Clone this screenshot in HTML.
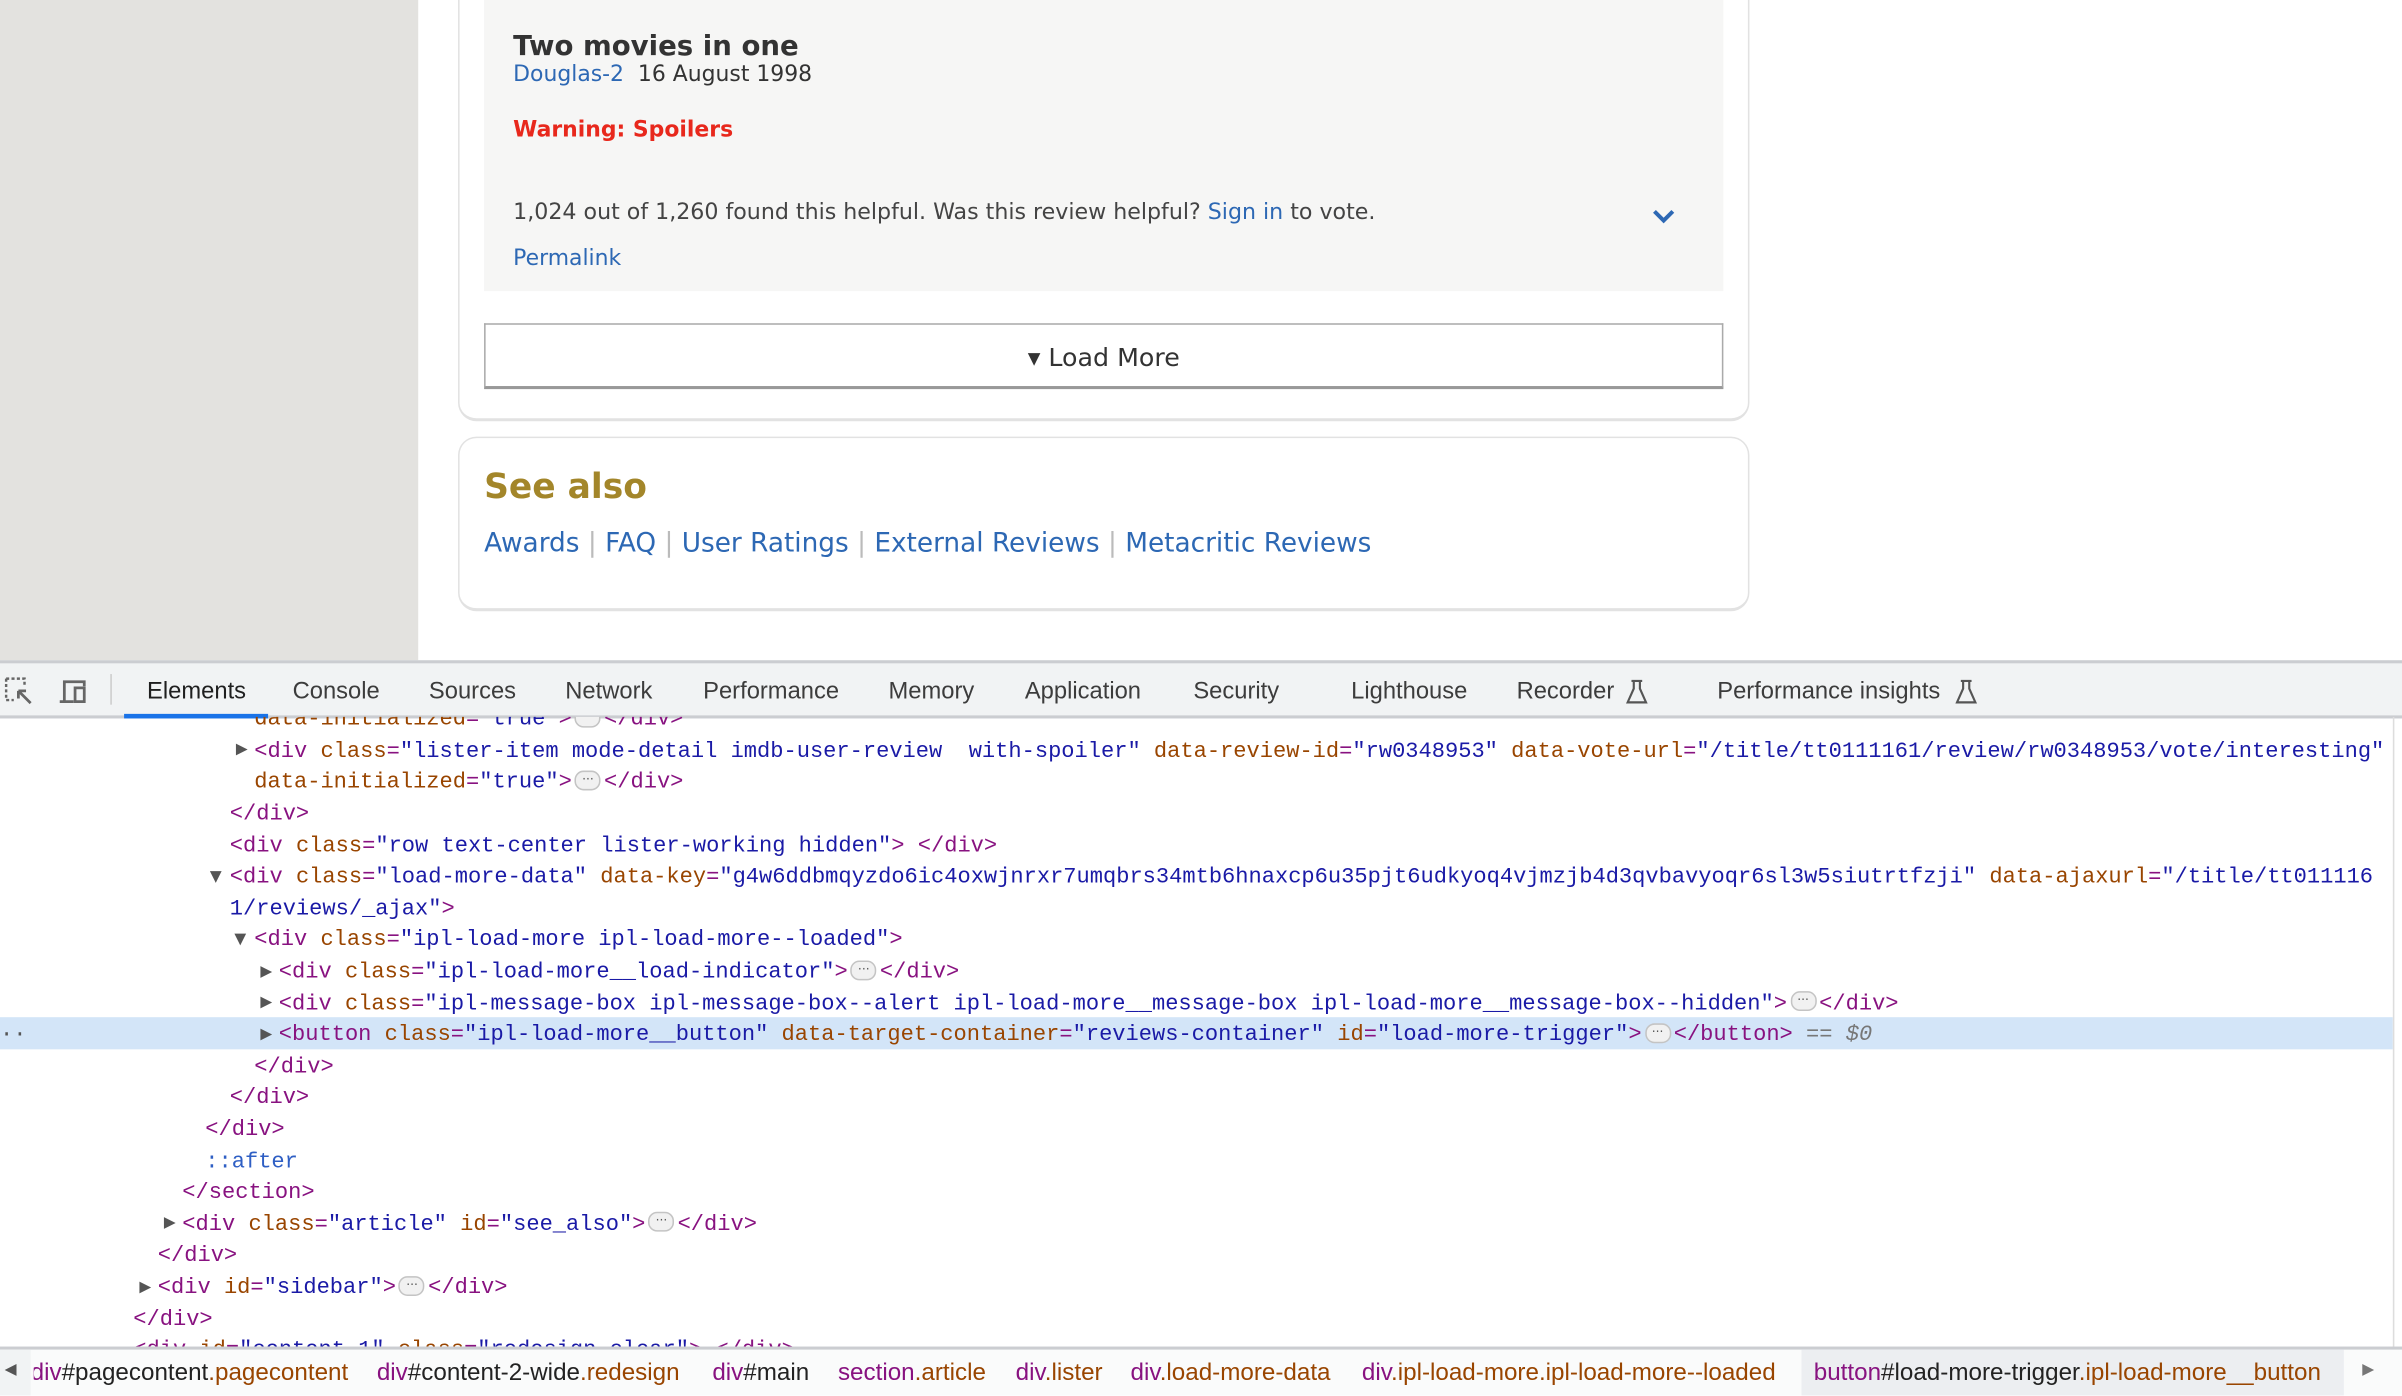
<!DOCTYPE html>
<html><head><meta charset="utf-8">
<style>
html,body{margin:0;padding:0;width:2402px;height:1396px;overflow:hidden;background:#fff}
#s{position:absolute;left:0;top:0;width:1568px;height:911px;transform:scale(1.5319);transform-origin:0 0;overflow:hidden;background:#fff}
.a{position:absolute;white-space:nowrap}
.v{font-family:"DejaVu Sans",Verdana,sans-serif}
.lnk{color:#2d68b4}
.code{position:absolute;left:0;top:468px;width:1562px;height:412px;overflow:hidden}
.l{position:absolute;white-space:pre;font-family:"Liberation Mono",monospace;font-size:14.4px;line-height:20.6px;height:20.6px;margin-top:2px}
.t{color:#881280}.n{color:#994500}.q{color:#1a1aa6}
.tri{position:absolute;font-size:10px;color:#555;font-family:"DejaVu Sans",sans-serif;margin-top:2px}
.e{display:inline-block;width:15px;height:11px;border:1px solid #c4c4c4;border-radius:6px;background:#f1f1f1;vertical-align:middle;position:relative;top:-1px;font-size:8px;line-height:10px;text-align:center;color:#555;font-family:"DejaVu Sans",sans-serif;margin:0 2px}
.tab{position:absolute;top:443px;font-family:"Liberation Sans",Arial,sans-serif;font-size:15.5px;color:#3c3c3c}
.bc{position:absolute;top:888px;font-family:"Liberation Sans",Arial,sans-serif;font-size:15.8px}
</style></head><body><div id="s">
<div class="a" style="left:0;top:0;width:273px;height:431px;background:#e3e2df"></div>
<div class="a" style="left:299px;top:-20px;width:843px;height:295px;border:1px solid #e2e2e2;border-bottom:2px solid #e2e2e2;border-radius:12px;box-sizing:border-box"></div>
<div class="a" style="left:316px;top:0;width:809px;height:190px;background:#f6f6f5"></div>
<div class="a v" style="left:335px;top:20px;font-size:18px;font-weight:bold;color:#333">Two movies in one</div>
<div class="a v" style="left:335px;top:41px;font-size:14.3px;color:#333"><span class="lnk">Douglas-2</span>&nbsp;&nbsp;16 August 1998</div>
<div class="a v" style="left:335px;top:77px;font-size:14.3px;font-weight:bold;color:#e8281c">Warning: Spoilers</div>
<div class="a v" style="left:335px;top:131px;font-size:14.45px;color:#444">1,024 out of 1,260 found this helpful. Was this review helpful? <span class="lnk">Sign in</span> to vote.</div>
<svg class="a" style="left:1078px;top:135px" width="16" height="12" viewBox="0 0 16 12"><path d="M2 3 L8 9 L14 3" stroke="#2d68b4" stroke-width="2.6" fill="none"/></svg>
<div class="a v lnk" style="left:335px;top:161px;font-size:14.3px">Permalink</div>
<div class="a" style="left:316px;top:211px;width:809px;height:43px;border:1px solid #aaa;border-bottom:2px solid #999;box-sizing:border-box;background:#fff"></div>
<div class="a v" style="left:316px;top:224px;width:809px;text-align:center;font-size:16.5px;color:#333">▾ Load More</div>
<div class="a" style="left:299px;top:285px;width:843px;height:114px;border:1px solid #e2e2e2;border-bottom:2px solid #e2e2e2;border-radius:12px;box-sizing:border-box"></div>
<div class="a v" style="left:316px;top:305px;font-size:22.5px;font-weight:bold;color:#a3862a">See also</div>
<div class="a v" style="left:316px;top:345px;font-size:17.2px;color:#bbb"><span class="lnk">Awards</span> | <span class="lnk">FAQ</span> | <span class="lnk">User Ratings</span> | <span class="lnk">External Reviews</span> | <span class="lnk">Metacritic Reviews</span></div>
<div class="a" style="left:0;top:431px;width:1568px;height:38px;background:#f1f3f4;border-top:2px solid #cbcdd1;border-bottom:2px solid #cbcdd1;box-sizing:border-box"></div>
<svg class="a" style="left:3px;top:442px" width="20" height="18" viewBox="0 0 20 18"><path d="M1 1h12v5M1 1v14h5" stroke="#666" stroke-width="1.6" stroke-dasharray="2 1.5" fill="none"/><path d="M9 9l8 8M9 9h5M9 9v5" stroke="#666" stroke-width="1.8" fill="none"/></svg>
<svg class="a" style="left:38px;top:442px" width="22" height="18" viewBox="0 0 22 18"><path d="M4 16V3h13v3M1 16h9M11 7h6v9h-6z" stroke="#666" stroke-width="1.8" fill="none"/></svg>
<div class="a" style="left:72px;top:440px;width:1px;height:20px;background:#ccc"></div>
<div class="tab" style="left:96px;color:#1f1f1f">Elements</div>
<div class="a" style="left:81px;top:466px;width:94px;height:3px;background:#1a73e8"></div>
<div class="tab" style="left:191px">Console</div>
<div class="tab" style="left:280px">Sources</div>
<div class="tab" style="left:369px">Network</div>
<div class="tab" style="left:459px">Performance</div>
<div class="tab" style="left:580px">Memory</div>
<div class="tab" style="left:669px">Application</div>
<div class="tab" style="left:779px">Security</div>
<div class="tab" style="left:882px">Lighthouse</div>
<div class="tab" style="left:990px">Recorder</div>
<svg class="a" style="left:1061px;top:443px" width="15" height="17" viewBox="0 0 15 17"><path d="M4 1.5h7M5.5 1.5v5L1.5 15.5h12L9.5 6.5v-5" stroke="#555" stroke-width="1.4" fill="none"/></svg>
<div class="tab" style="left:1121px">Performance insights</div>
<svg class="a" style="left:1276px;top:443px" width="15" height="17" viewBox="0 0 15 17"><path d="M4 1.5h7M5.5 1.5v5L1.5 15.5h12L9.5 6.5v-5" stroke="#555" stroke-width="1.4" fill="none"/></svg>
<div class="code">
<div class="a" style="left:0;top:196px;width:1562px;height:20.6px;background:#d3e5f8"></div>
<div class="l" style="left:166px;top:-9.9px"><span class="n">data-initialized</span><span class="t">=</span><span class="q">"true"</span><span class="t">&gt;</span><span class="e">···</span><span class="t">&lt;/div&gt;</span></div>
<span class="tri" style="left:154px;top:14px">▶</span>
<div class="l" style="left:166px;top:10.7px"><span class="t">&lt;div </span><span class="n">class</span><span class="t">=</span><span class="q">"lister-item mode-detail imdb-user-review  with-spoiler"</span> <span class="n">data-review-id</span><span class="t">=</span><span class="q">"rw0348953"</span> <span class="n">data-vote-url</span><span class="t">=</span><span class="q">"/title/tt0111161/review/rw0348953/vote/interesting"</span></div>
<div class="l" style="left:166px;top:31.3px"><span class="n">data-initialized</span><span class="t">=</span><span class="q">"true"</span><span class="t">&gt;</span><span class="e">···</span><span class="t">&lt;/div&gt;</span></div>
<div class="l" style="left:150px;top:51.9px"><span class="t">&lt;/div&gt;</span></div>
<div class="l" style="left:150px;top:72.5px"><span class="t">&lt;div </span><span class="n">class</span><span class="t">=</span><span class="q">"row text-center lister-working hidden"</span><span class="t">&gt;</span> <span class="t">&lt;/div&gt;</span></div>
<span class="tri" style="left:137px;top:97px">▼</span>
<div class="l" style="left:150px;top:93.1px"><span class="t">&lt;div </span><span class="n">class</span><span class="t">=</span><span class="q">"load-more-data"</span> <span class="n">data-key</span><span class="t">=</span><span class="q">"g4w6ddbmqyzdo6ic4oxwjnrxr7umqbrs34mtb6hnaxcp6u35pjt6udkyoq4vjmzjb4d3qvbavyoqr6sl3w5siutrtfzji"</span> <span class="n">data-ajaxurl</span><span class="t">=</span><span class="q">"/title/tt011116</span></div>
<div class="l" style="left:150px;top:113.7px"><span class="q">1/reviews/_ajax"</span><span class="t">&gt;</span></div>
<span class="tri" style="left:153px;top:138px">▼</span>
<div class="l" style="left:166px;top:134.3px"><span class="t">&lt;div </span><span class="n">class</span><span class="t">=</span><span class="q">"ipl-load-more ipl-load-more--loaded"</span><span class="t">&gt;</span></div>
<span class="tri" style="left:170px;top:159px">▶</span>
<div class="l" style="left:182px;top:154.9px"><span class="t">&lt;div </span><span class="n">class</span><span class="t">=</span><span class="q">"ipl-load-more__load-indicator"</span><span class="t">&gt;</span><span class="e">···</span><span class="t">&lt;/div&gt;</span></div>
<span class="tri" style="left:170px;top:179px">▶</span>
<div class="l" style="left:182px;top:175.5px"><span class="t">&lt;div </span><span class="n">class</span><span class="t">=</span><span class="q">"ipl-message-box ipl-message-box--alert ipl-load-more__message-box ipl-load-more__message-box--hidden"</span><span class="t">&gt;</span><span class="e">···</span><span class="t">&lt;/div&gt;</span></div>
<div class="l" style="left:0;top:196px;color:#555">··</div>
<span class="tri" style="left:170px;top:200px">▶</span>
<div class="l" style="left:182px;top:196px"><span class="t">&lt;button </span><span class="n">class</span><span class="t">=</span><span class="q">"ipl-load-more__button"</span> <span class="n">data-target-container</span><span class="t">=</span><span class="q">"reviews-container"</span> <span class="n">id</span><span class="t">=</span><span class="q">"load-more-trigger"</span><span class="t">&gt;</span><span class="e">···</span><span class="t">&lt;/button&gt;</span> <span style="color:#777">== <i>$0</i></span></div>
<div class="l" style="left:166px;top:216.7px"><span class="t">&lt;/div&gt;</span></div>
<div class="l" style="left:150px;top:237.3px"><span class="t">&lt;/div&gt;</span></div>
<div class="l" style="left:134px;top:257.9px"><span class="t">&lt;/div&gt;</span></div>
<div class="l" style="left:134px;top:278.5px;color:#2f5fc4">::after</div>
<div class="l" style="left:119px;top:299.1px"><span class="t">&lt;/section&gt;</span></div>
<span class="tri" style="left:107px;top:323px">▶</span>
<div class="l" style="left:119px;top:319.7px"><span class="t">&lt;div </span><span class="n">class</span><span class="t">=</span><span class="q">"article"</span> <span class="n">id</span><span class="t">=</span><span class="q">"see_also"</span><span class="t">&gt;</span><span class="e">···</span><span class="t">&lt;/div&gt;</span></div>
<div class="l" style="left:103px;top:340.3px"><span class="t">&lt;/div&gt;</span></div>
<span class="tri" style="left:91px;top:365px">▶</span>
<div class="l" style="left:103px;top:360.9px"><span class="t">&lt;div </span><span class="n">id</span><span class="t">=</span><span class="q">"sidebar"</span><span class="t">&gt;</span><span class="e">···</span><span class="t">&lt;/div&gt;</span></div>
<div class="l" style="left:87px;top:381.5px"><span class="t">&lt;/div&gt;</span></div>
<div class="l" style="left:87px;top:402px"><span class="t">&lt;div </span><span class="n">id</span><span class="t">=</span><span class="q">"content-1"</span> <span class="n">class</span><span class="t">=</span><span class="q">"redesign clear"</span><span class="t">&gt;</span> <span class="t">&lt;/div&gt;</span></div>
</div>
<div class="a" style="left:1562px;top:468px;width:1px;height:412px;background:#ddd"></div>
<div class="a" style="left:0;top:879px;width:1568px;height:32px;background:#fafbfb;border-top:2px solid #cbcdd1;box-sizing:border-box"></div>
<div class="a" style="left:1176px;top:881px;width:354px;height:30px;background:#eceef1"></div>
<div class="a" style="left:22px;top:881px;width:1154px;height:30px;overflow:hidden">
<div class="bc" style="left:-2px;top:7px"><span class="t">div</span><span style="color:#222">#pagecontent</span><span class="n">.pagecontent</span></div>
<div class="bc" style="left:224px;top:7px"><span class="t">div</span><span style="color:#222">#content-2-wide</span><span class="n">.redesign</span></div>
<div class="bc" style="left:443px;top:7px"><span class="t">div</span><span style="color:#222">#main</span></div>
<div class="bc" style="left:525px;top:7px"><span class="t">section</span><span class="n">.article</span></div>
<div class="bc" style="left:641px;top:7px"><span class="t">div</span><span class="n">.lister</span></div>
<div class="bc" style="left:716px;top:7px"><span class="t">div</span><span class="n">.load-more-data</span></div>
<div class="bc" style="left:867px;top:7px"><span class="t">div</span><span class="n">.ipl-load-more.ipl-load-more--loaded</span></div>
</div>
<div class="a" style="left:0;top:881px;width:20px;height:30px;background:#f1f3f4"></div>
<div class="a" style="left:3px;top:889px;font-size:10px;color:#555">◀</div>
<div class="a" style="left:1542px;top:889px;font-size:10px;color:#777">▶</div>
<div class="bc" style="left:1184px"><span class="t">button</span><span style="color:#222">#load-more-trigger</span><span class="n">.ipl-load-more__button</span></div>
</div></body></html>
